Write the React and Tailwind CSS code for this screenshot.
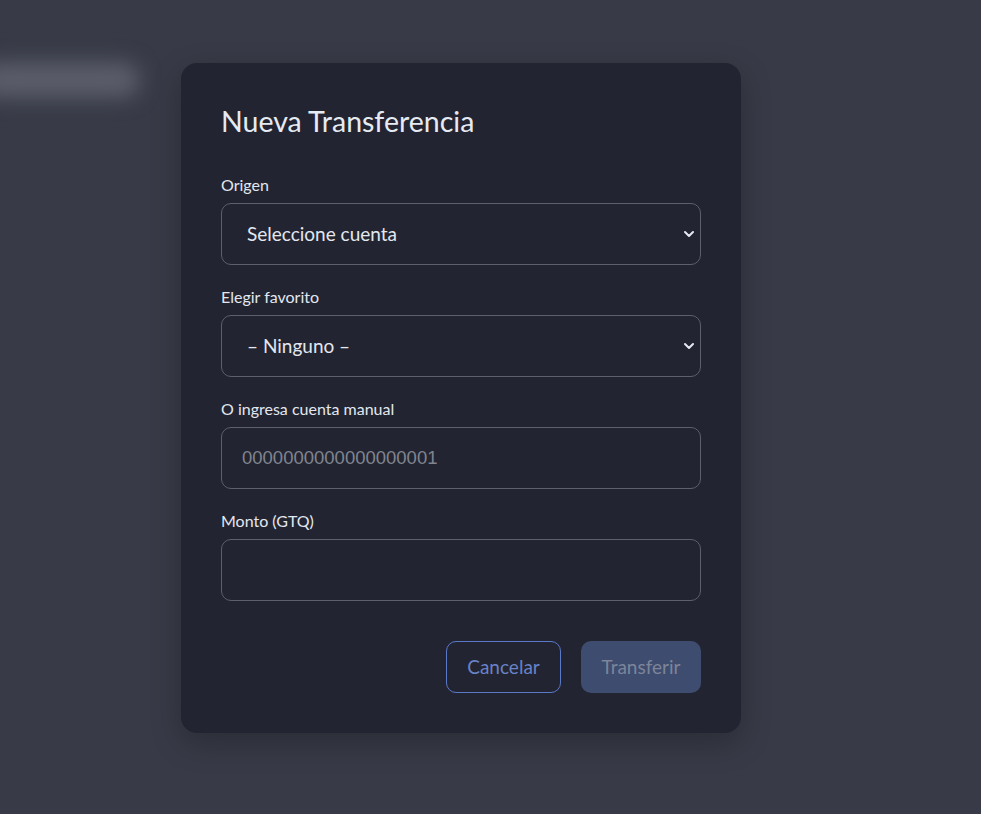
import { useState } from "react";

const Chevron = () => (
  <svg
    className="pointer-events-none absolute right-[6px] top-1/2 -translate-y-1/2"
    width="12"
    height="12"
    viewBox="0 0 12 12"
    fill="none"
  >
    <path d="M2 4l4 4 4-4" stroke="#e5e9f2" strokeWidth="2" strokeLinecap="round" strokeLinejoin="round" />
  </svg>
);

const fieldClass =
  "w-full h-[62px] rounded-[10px] border border-[#5c606c] bg-[#222531] px-[25px] text-[19px] text-[#e3e7f0] outline-none";

export default function App() {
  const [origen, setOrigen] = useState("");
  const [favorito, setFavorito] = useState("");
  const [cuenta, setCuenta] = useState("");
  const [monto, setMonto] = useState("");

  return (
    <div
      className="relative min-h-screen overflow-hidden bg-[#383b47]"
      style={{ fontFamily: '"Lato", "Noto Sans", sans-serif' }}
    >
      {/* contenido borroso detrás del modal */}
      <div className="absolute left-[-20px] top-[62px] h-[36px] w-[160px] rounded-full bg-[#5a5d69] blur-[10px]"></div>

      <div className="relative z-10 pl-[181px] pt-[63px]">
        <div className="w-[560px] rounded-[16px] bg-[#222531] px-[40px] pt-[40px] pb-[40px] shadow-[0_10px_30px_rgba(0,0,0,0.25)]">
          <h2 className="text-[28.5px] leading-[37px] text-[#e6eaf3]">Nueva Transferencia</h2>

          <div className="mt-[35px]">
            <label className="block text-[16px] leading-[20px] text-[#e3e7f0]">Origen</label>
            <div className="relative mt-[8px]">
              <select
                value={origen}
                onChange={(e) => setOrigen(e.target.value)}
                className={`${fieldClass} appearance-none`}
              >
                <option value="">Seleccione cuenta</option>
              </select>
              <Chevron />
            </div>
          </div>

          <div className="mt-[22px]">
            <label className="block text-[16px] leading-[20px] text-[#e3e7f0]">Elegir favorito</label>
            <div className="relative mt-[8px]">
              <select
                value={favorito}
                onChange={(e) => setFavorito(e.target.value)}
                className={`${fieldClass} appearance-none`}
              >
                <option value="">– Ninguno –</option>
              </select>
              <Chevron />
            </div>
          </div>

          <div className="mt-[22px]">
            <label className="block text-[16px] leading-[20px] text-[#e3e7f0]">O ingresa cuenta manual</label>
            <input
              value={cuenta}
              onChange={(e) => setCuenta(e.target.value)}
              placeholder="0000000000000000001"
              className={`${fieldClass} mt-[8px] !px-[20px] placeholder:text-[#80848f]`}
              style={{ fontFamily: '"Liberation Sans", Arial, sans-serif', fontSize: "18.5px" }}
            />
          </div>

          <div className="mt-[22px]">
            <label className="block text-[16px] leading-[20px] text-[#e3e7f0]">Monto (GTQ)</label>
            <input
              value={monto}
              onChange={(e) => setMonto(e.target.value)}
              className={`${fieldClass} mt-[8px]`}
            />
          </div>

          <div className="mt-[40px] flex justify-end gap-[20px]">
            <button className="h-[52px] w-[115px] rounded-[10px] border border-[#5b78c9] text-[19px] text-[#6982c8]">
              Cancelar
            </button>
            <button
              disabled
              className="h-[52px] w-[120px] rounded-[10px] bg-[#3e4c6f] text-[19px] text-[#7c8599]"
            >
              Transferir
            </button>
          </div>
        </div>
      </div>
    </div>
  );
}
